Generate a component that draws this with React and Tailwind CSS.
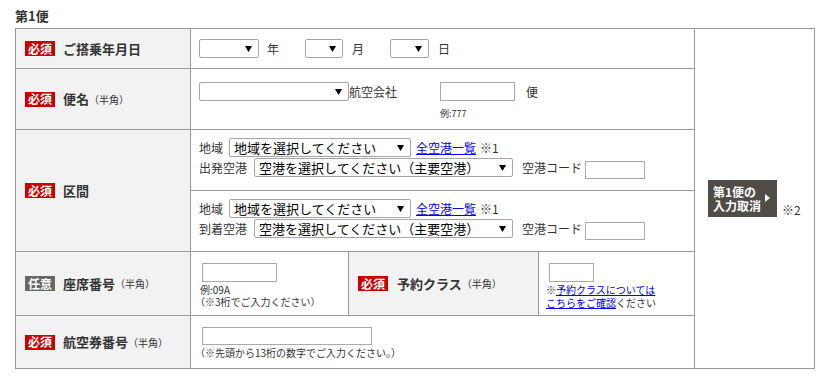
import React from "react";

const Arrow = () => (
  <svg width="7" height="6" viewBox="0 0 7 6" className="shrink-0">
    <path d="M0 0H7L3.5 6Z" fill="#000" />
  </svg>
);

const Sel = ({ w, text }) => (
  <div
    className={`flex items-center justify-between h-[19px] border border-[#a6a6a6] rounded-[2px] bg-white pl-[4px] pr-[6px] text-[13px] leading-none text-black shrink-0 ${w}`}
  >
    <span className="whitespace-nowrap">{text}</span>
    <Arrow />
  </div>
);

const Inp = ({ w, h = "h-[19px]", extra = "" }) => (
  <div className={`border border-[#aaaaaa] bg-white shrink-0 ${w} ${h} ${extra}`} />
);

const Badge = ({ kind }) => (
  <div
    className={`w-[30px] h-[15px] flex items-center justify-center text-white text-[12px] font-bold leading-none shrink-0 ${
      kind === "opt" ? "bg-[#666666]" : "bg-[#cc0000]"
    }`}
  >
    {kind === "opt" ? "任意" : "必須"}
  </div>
);

const Label = ({ pos, kind, text, half }) => (
  <div
    className={`flex items-center bg-[#f2f2f2] border-r border-b border-[#999999] pl-[9px] ${pos}`}
  >
    <Badge kind={kind} />
    <span className="ml-[8px] text-[13px] font-bold text-[#333333] whitespace-nowrap">{text}</span>
    {half && <span className="text-[10px] text-[#333333] whitespace-nowrap">（半角）</span>}
  </div>
);

const Link = ({ children }) => (
  <span className="text-[#0000ee] underline whitespace-nowrap">{children}</span>
);

export default function App() {
  return (
    <div
      className="bg-white w-[828px] h-[386px] pl-[15px] pt-[8px] text-[#333333]"
      style={{ fontFamily: '"Noto Sans CJK JP", "Noto Sans", sans-serif' }}
    >
      <div className="text-[13px] font-bold leading-[16px] mb-[4px]">第1便</div>

      <div className="grid grid-cols-[175px_504px_120px] grid-rows-[40px_61px_61px_61px_64px_53px] w-[800px] border-t border-l border-[#999999]">
        {/* Row 1 */}
        <Label pos="col-start-1 row-start-1" kind="req" text="ご搭乗年月日" />
        <div className="col-start-2 row-start-1 border-r border-b border-[#999999] flex items-center pl-[8px] text-[12px]">
          <Sel w="w-[60px]" text="" />
          <span className="ml-[8px]">年</span>
          <div className="ml-[26px]"><Sel w="w-[38px]" text="" /></div>
          <span className="ml-[9px]">月</span>
          <div className="ml-[26px]"><Sel w="w-[39px]" text="" /></div>
          <span className="ml-[9px]">日</span>
        </div>

        {/* Cancel column */}
        <div className="col-start-3 row-start-1 row-span-6 border-r border-b border-[#999999] flex items-center pl-[13px]">
          <div className="flex items-end">
            <div className="w-[69px] h-[37px] bg-[#504c47] flex items-center pl-[5px]">
              <div className="text-white text-[12px] font-bold leading-[14px]">
                <div>第1便の</div>
                <div>入力取消</div>
              </div>
              <svg width="5" height="8" viewBox="0 0 5 8" className="ml-auto mr-[7px] mb-[2px]">
                <path d="M0 0L5 4L0 8Z" fill="#ffffff" />
              </svg>
            </div>
            <span className="ml-[5px] text-[12px] leading-[12px] mb-[1px]">※2</span>
          </div>
        </div>

        {/* Row 2 */}
        <Label pos="col-start-1 row-start-2" kind="req" text="便名" half />
        <div className="col-start-2 row-start-2 border-r border-b border-[#999999] flex items-start pl-[8px] pt-[13px] text-[12px]">
          <Sel w="w-[150px]" text="" />
          <span className="h-[19px] flex items-center">航空会社</span>
          <div className="ml-[43px] flex flex-col">
            <Inp w="w-[75px]" />
            <span className="text-[9px] leading-[10px] mt-[8px]">例:777</span>
          </div>
          <span className="ml-[11px] h-[19px] flex items-center">便</span>
        </div>

        {/* Row 3: 区間 */}
        <Label pos="col-start-1 row-start-3 row-span-2" kind="req" text="区間" />
        {["出発空港", "到着空港"].map((t, i) => (
          <div
            key={t}
            className={`col-start-2 border-r border-b border-[#999999] flex flex-col pl-[8px] pt-[8px] text-[12px] ${
              i === 0 ? "row-start-3" : "row-start-4"
            }`}
          >
            <div className="flex items-center h-[19px]">
              <span>地域</span>
              <div className="ml-[6px]"><Sel w="w-[182px]" text="地域を選択してください" /></div>
              <span className="ml-[5px]"><Link>全空港一覧</Link></span>
              <span className="ml-[4px]">※1</span>
            </div>
            <div className="flex items-start mt-[1px]">
              <span className="h-[19px] flex items-center">{t}</span>
              <div className="ml-[7px]"><Sel w="w-[259px]" text="空港を選択してください（主要空港）" /></div>
              <span className="ml-[9px] h-[19px] flex items-center">空港コード</span>
              <Inp w="w-[60px]" h="h-[18px]" extra="ml-[3px] mt-[3px]" />
            </div>
          </div>
        ))}

        {/* Row 4 */}
        <Label pos="col-start-1 row-start-5" kind="opt" text="座席番号" half />
        <div className="col-start-2 row-start-5 border-r border-b border-[#999999] flex">
          <div className="w-[158px] border-r border-[#999999] pl-[11px] pt-[11px] flex flex-col">
            <Inp w="w-[75px]" />
            <div className="text-[10px] leading-[12px] mt-[2px]">
              <div className="-ml-[2px]">例:09A</div>
              <div className="whitespace-nowrap -ml-[7px]">（※3桁でご入力ください）</div>
            </div>
          </div>
          <div className="w-[190px] border-r border-[#999999] bg-[#f2f2f2] flex items-center pl-[9px]">
            <Badge kind="req" />
            <span className="ml-[9px] text-[13px] font-bold text-[#333333] whitespace-nowrap">予約クラス</span>
            <span className="text-[10px] whitespace-nowrap">（半角）</span>
          </div>
          <div className="flex-1 pl-[7px] pt-[11px] flex flex-col">
            <Inp w="w-[45px]" extra="ml-[3px]" />
            <div className="text-[10px] leading-[13px] mt-[1px] whitespace-nowrap">
              ※<span className="text-[#0000ee] underline">予約クラスについては</span>
              <br />
              <span className="text-[#0000ee] underline">こちらをご確認</span>ください
            </div>
          </div>
        </div>

        {/* Row 5 */}
        <Label pos="col-start-1 row-start-6" kind="req" text="航空券番号" half />
        <div className="col-start-2 row-start-6 border-r border-b border-[#999999] pl-[11px] pt-[11px] flex flex-col">
          <Inp w="w-[170px]" h="h-[18px]" />
          <div className="text-[10px] leading-[12px] mt-[2px] whitespace-nowrap -ml-[7px]">
            （※先頭から13桁の数字でご入力ください。）
          </div>
        </div>
      </div>
    </div>
  );
}
